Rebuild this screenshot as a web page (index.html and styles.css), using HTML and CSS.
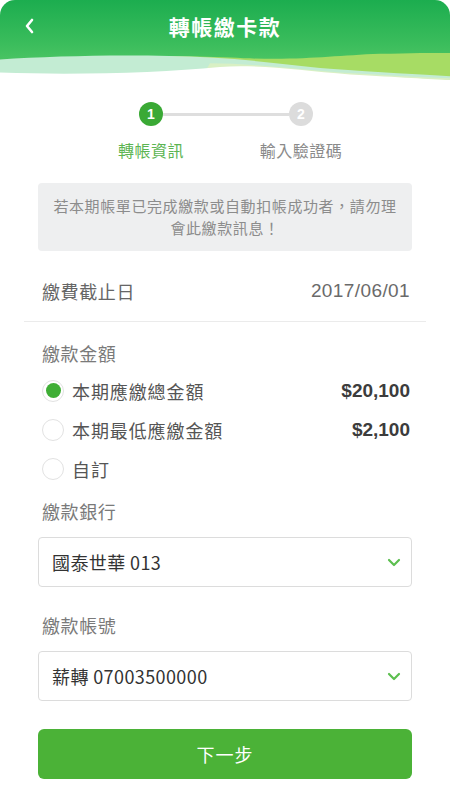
FILE: index.html
```html
<!DOCTYPE html>
<html lang="zh-Hant">
<head>
<meta charset="utf-8">
<title>轉帳繳卡款</title>
<link rel="stylesheet" href="styles.css">
</head>
<body>
<div class="app">
  <header class="header">
    <div class="titlebar">
      <button class="back" aria-label="返回">
        <svg width="12" height="16" viewBox="0 0 12 16"><path d="M8 2 L3 8 L8 14" fill="none" stroke="#fff" stroke-width="2.6" stroke-linecap="round" stroke-linejoin="round"/></svg>
      </button>
      <h1 class="title">轉帳繳卡款</h1>
      <span class="spacer"></span>
    </div>
    <svg class="wave" viewBox="0 0 450 30" preserveAspectRatio="none">
      <path d="M0 14 C 60 6, 150 2, 230 6 C 300 10, 330 4, 380 2 C 410 1, 435 1, 450 1 L450 30 L0 30 Z" fill="#a7dc64"/>
      <path d="M0 8 C 60 4, 140 2, 210 6 C 260 9, 290 14, 330 18 C 380 22, 420 24, 450 26 L450 30 L0 30 Z" fill="#c3ecd3"/>
      <path d="M210 12 C 250 12, 290 18, 340 22 C 390 25, 430 28, 450 28 L450 30 L200 30 Z" fill="#d9f0c4"/>
      <path d="M0 22 C 80 25, 160 22, 220 16 C 260 13, 300 20, 350 24 C 400 27, 430 29, 450 30 L0 30 Z" fill="#ffffff"/>
    </svg>
  </header>

  <main class="content">
    <div class="stepper">
      <div class="step active">
        <span class="dot">1</span>
        <span class="step-label">轉帳資訊</span>
      </div>
      <div class="connector"></div>
      <div class="step">
        <span class="dot">2</span>
        <span class="step-label">輸入驗證碼</span>
      </div>
    </div>

    <p class="notice">若本期帳單已完成繳款或自動扣帳成功者，請勿理會此繳款訊息！</p>

    <div class="row deadline">
      <span>繳費截止日</span>
      <span class="date">2017/06/01</span>
    </div>
    <div class="divider"></div>

    <div class="label">繳款金額</div>
    <div class="radios">
      <label class="radio-row">
        <span class="radio checked"></span>
        <span class="radio-text">本期應繳總金額</span>
        <span class="amount">$20,100</span>
      </label>
      <label class="radio-row">
        <span class="radio"></span>
        <span class="radio-text">本期最低應繳金額</span>
        <span class="amount">$2,100</span>
      </label>
      <label class="radio-row">
        <span class="radio"></span>
        <span class="radio-text">自訂</span>
      </label>
    </div>

    <div class="label bank-label">繳款銀行</div>
    <div class="select">
      <span>國泰世華 013</span>
      <svg class="chev" width="14" height="9" viewBox="0 0 14 9"><path d="M2 2 L7 7 L12 2" fill="none" stroke="#5cbf4f" stroke-width="2.2" stroke-linecap="round" stroke-linejoin="round"/></svg>
    </div>

    <div class="label acct-label">繳款帳號</div>
    <div class="select">
      <span>薪轉 07003500000</span>
      <svg class="chev" width="14" height="9" viewBox="0 0 14 9"><path d="M2 2 L7 7 L12 2" fill="none" stroke="#5cbf4f" stroke-width="2.2" stroke-linecap="round" stroke-linejoin="round"/></svg>
    </div>

    <button class="primary">下一步</button>
  </main>
</div>
</body>
</html>
```

FILE: styles.css
```css
* { box-sizing: border-box; }
html, body { margin: 0; padding: 0; background: #ffffff; }
body {
  font-family: "Noto Sans CJK TC", "Noto Sans", "Liberation Sans", sans-serif;
  color: #555;
}
.app { width: 450px; min-height: 800px; background: #fff; }

.header {
  background: linear-gradient(180deg, #1cad4f 0%, #3bbd5c 55%, #5ccc6c 100%);
  border-radius: 15px 15px 0 0;
  display: flex;
  flex-direction: column;
}
.titlebar {
  height: 52px;
  display: flex;
  align-items: center;
  padding: 0 16px 0 20px;
}
.back {
  width: 20px; height: 24px;
  background: none; border: 0; padding: 0;
  display: flex; align-items: center; justify-content: center;
}
.title {
  flex: 1;
  margin: 0;
  text-align: center;
  color: #fff;
  font-size: 21px;
  font-weight: 700;
  letter-spacing: 1.5px;
  padding-right: 4px;
}
.spacer { width: 20px; }
.wave { display: block; width: 450px; height: 28px; }

.content { padding: 0 38px; display: flex; flex-direction: column; }

.stepper {
  display: flex;
  align-items: flex-start;
  justify-content: center;
  padding-top: 22px;
  margin-left: 2px;
}
.step {
  width: 100px;
  display: flex;
  flex-direction: column;
  align-items: center;
  gap: 13px;
}
.dot {
  width: 24px; height: 24px;
  border-radius: 50%;
  background: #dcdcdc;
  color: #fff;
  font-family: "Liberation Sans", sans-serif;
  font-size: 14px;
  font-weight: 700;
  display: flex; align-items: center; justify-content: center;
}
.step.active .dot { background: #3aa935; }
.step-label {
  font-size: 16px;
  line-height: 22px;
  letter-spacing: 0.5px;
  color: #8a8a8a;
}
.step.active .step-label { color: #5cb552; }
.connector {
  width: 126px;
  height: 3px;
  background: #dedede;
  margin: 10.5px -38px 0;
}

.notice {
  margin: 22px 0 0;
  background: #eeeff0;
  border-radius: 4px;
  padding: 12px 14px;
  font-size: 15px;
  line-height: 22px;
  letter-spacing: 0.6px;
  text-align: center;
  color: #8c8c8c;
}

.row {
  display: flex;
  justify-content: space-between;
  align-items: center;
}
.deadline {
  height: 70px;
  padding: 10px 2px 0 4px;
  font-size: 18px;
  line-height: 22px;
  letter-spacing: 0.6px;
  color: #666;
}
.date { font-family: "Liberation Sans", sans-serif; font-size: 19px; letter-spacing: 0.4px; color: #6a6a6a; }
.divider { height: 1px; background: #ebebeb; margin: 0 -14px; }

.label {
  font-size: 18px;
  line-height: 22px;
  letter-spacing: 0.6px;
  color: #7a7a7a;
  padding-left: 4px;
  margin-top: 20px;
}
.radios { display: flex; flex-direction: column; margin-top: 7px; }
.radio-row {
  display: flex;
  align-items: center;
  height: 39px;
  padding-left: 4px;
  padding-right: 2px;
}
.radio {
  width: 22px; height: 22px;
  border-radius: 50%;
  border: 1px solid #e2e2e2;
  background: #fff;
  display: flex; align-items: center; justify-content: center;
  flex: none;
}
.radio.checked::after {
  content: "";
  width: 15px; height: 15px;
  border-radius: 50%;
  background: #3fae35;
}
.radio-text {
  flex: 1;
  margin-left: 8px;
  font-size: 18px;
  line-height: 22px;
  letter-spacing: 0.9px;
  color: #555;
}
.amount {
  font-family: "Liberation Sans", sans-serif;
  font-weight: 700;
  font-size: 19px;
  line-height: 22px;
  color: #3c3c3c;
}
.bank-label { margin-top: 12px; }
.acct-label { margin-top: 27px; }

.select {
  margin-top: 15px;
  height: 50px;
  border: 1px solid #dcdcdc;
  border-radius: 4px;
  display: flex;
  align-items: center;
  justify-content: space-between;
  padding: 0 10px 0 13px;
  font-size: 18px;
  line-height: 22px;
  color: #333;
  letter-spacing: 0.4px;
}
.chev { display: block; }

.primary {
  margin-top: 28px;
  height: 50px;
  border: 0;
  border-radius: 6px;
  background: #4bb237;
  color: #fff;
  font-family: "Noto Sans CJK TC", sans-serif;
  font-size: 18px;
  letter-spacing: 1px;
}
```
